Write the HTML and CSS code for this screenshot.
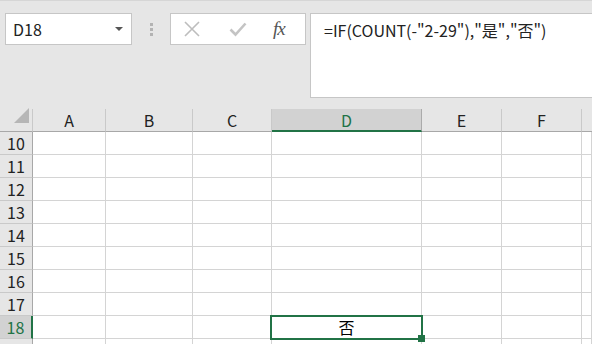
FILE: index.html
```html
<!DOCTYPE html>
<html lang="zh">
<head>
<meta charset="utf-8">
<link rel="stylesheet" href="styles.css">
</head>
<body>
<div class="app">
  <div class="toolbar">
    <div class="namebox">
      <span class="name">D18</span>
      <span class="caret"></span>
    </div>
    <div class="grip"><i></i><i></i><i></i></div>
    <div class="buttons">
      <svg class="ico" width="18" height="18" viewBox="0 0 18 18"><path d="M2 2 L16 16 M16 2 L2 16" stroke="#bdbdbd" stroke-width="1.6" fill="none"/></svg>
      <svg class="ico" width="18" height="18" viewBox="0 0 18 18"><path d="M1.5 9.5 L6.5 14.5 L16.5 3.5" stroke="#c4c4c4" stroke-width="2.6" fill="none"/></svg>
      <span class="fx">fx</span>
    </div>
    <div class="formula">=IF(COUNT(-"2-29"),"是","否")</div>
  </div>
  <div class="sheet">
    <div class="corner"><span class="tri"></span></div>
    <div class="ch">A</div>
    <div class="ch">B</div>
    <div class="ch">C</div>
    <div class="ch sel">D</div>
    <div class="ch">E</div>
    <div class="ch">F</div>
    <div class="ch last"></div>

    <div class="rh">10</div><div class="c"></div><div class="c"></div><div class="c"></div><div class="c"></div><div class="c"></div><div class="c"></div><div class="c"></div>
    <div class="rh">11</div><div class="c"></div><div class="c"></div><div class="c"></div><div class="c"></div><div class="c"></div><div class="c"></div><div class="c"></div>
    <div class="rh">12</div><div class="c"></div><div class="c"></div><div class="c"></div><div class="c"></div><div class="c"></div><div class="c"></div><div class="c"></div>
    <div class="rh">13</div><div class="c"></div><div class="c"></div><div class="c"></div><div class="c"></div><div class="c"></div><div class="c"></div><div class="c"></div>
    <div class="rh">14</div><div class="c"></div><div class="c"></div><div class="c"></div><div class="c"></div><div class="c"></div><div class="c"></div><div class="c"></div>
    <div class="rh">15</div><div class="c"></div><div class="c"></div><div class="c"></div><div class="c"></div><div class="c"></div><div class="c"></div><div class="c"></div>
    <div class="rh">16</div><div class="c"></div><div class="c"></div><div class="c"></div><div class="c"></div><div class="c"></div><div class="c"></div><div class="c"></div>
    <div class="rh">17</div><div class="c"></div><div class="c"></div><div class="c"></div><div class="c"></div><div class="c"></div><div class="c"></div><div class="c"></div>
    <div class="rh sel">18</div><div class="c"></div><div class="c"></div><div class="c"></div><div class="c active">否<span class="handle"></span></div><div class="c"></div><div class="c"></div><div class="c"></div>
    <div class="rh"></div><div class="c"></div><div class="c"></div><div class="c"></div><div class="c"></div><div class="c"></div><div class="c"></div><div class="c"></div>
  </div>
</div>
</body>
</html>
```

FILE: styles.css
```css
html, body {
  margin: 0;
  padding: 0;
  background: #e6e6e6;
  overflow: hidden;
}
body {
  width: 592px;
  height: 344px;
  font-family: "Noto Sans CJK SC", "Noto Sans", sans-serif;
  color: #222;
}
.app {
  display: flex;
  flex-direction: column;
  height: 344px;
  border-top: 1px solid #d6d6d6;
  box-sizing: border-box;
  overflow: hidden;
}
.toolbar {
  flex: none;
  display: flex;
  align-items: flex-start;
  height: 108px;
  padding-top: 12px;
  box-sizing: border-box;
}
.namebox {
  margin-left: 5px;
  width: 127px;
  height: 32px;
  box-sizing: border-box;
  background: #fff;
  border: 1px solid #c6c6c6;
  display: flex;
  align-items: center;
  justify-content: space-between;
  padding: 0 8px 0 7px;
}
.name {
  font-size: 16px;
  line-height: 1;
  color: #222;
}
.caret {
  width: 0;
  height: 0;
  border-left: 4px solid transparent;
  border-right: 4px solid transparent;
  border-top: 4px solid #555;
}
.grip {
  width: 38px;
  height: 32px;
  display: flex;
  flex-direction: column;
  align-items: center;
  justify-content: center;
  gap: 2px;
}
.grip i {
  display: block;
  width: 3px;
  height: 3px;
  background: #b3b3b3;
}
.buttons {
  width: 136px;
  height: 32px;
  box-sizing: border-box;
  background: #fff;
  border: 1px solid #c6c6c6;
  display: flex;
  align-items: center;
  padding-left: 12px;
  gap: 28px;
}
.ico { display: block; flex: none; }
.fx {
  font-family: "Liberation Serif", serif;
  font-style: italic;
  font-size: 19px;
  color: #555;
  margin-left: -2px;
  letter-spacing: -1px;
}
.formula {
  margin-left: 4px;
  flex: 1;
  height: 85px;
  box-sizing: border-box;
  background: #fff;
  border: 1px solid #c6c6c6;
  border-right: none;
  padding: 5px 0 0 13px;
  font-size: 16px;
  line-height: 22px;
  color: #222;
  white-space: nowrap;
}
.sheet {
  display: grid;
  grid-template-columns: 33px 73px 87px 79px 150px 80px 80px 1fr;
  grid-template-rows: repeat(10, 23px) 20px;
  background: #fff;
  flex: none;
}
.corner, .ch {
  background: #e6e6e6;
  border-right: 1px solid #c9c9c9;
  border-bottom: 1px solid #a8a8a8;
  box-sizing: border-box;
}
.corner {
  position: relative;
}
.tri {
  position: absolute;
  right: 3px;
  bottom: 8px;
  width: 0;
  height: 0;
  border-left: 15px solid transparent;
  border-bottom: 15px solid #b6b6b6;
}
.ch {
  font-size: 16px;
  line-height: 22px;
  text-align: center;
  color: #222;
}
.ch.sel {
  background: #d2d2d2;
  color: #217346;
  border-bottom: 2px solid #217346;
  border-right-color: #ababab;
}
.ch.last { border-right: none; }
.rh {
  background: #e6e6e6;
  border-right: 1px solid #a8a8a8;
  border-bottom: 1px solid #c9c9c9;
  box-sizing: border-box;
  font-size: 16px;
  line-height: 22px;
  text-align: center;
  color: #222;
}
.rh.sel {
  background: #d2d2d2;
  color: #217346;
  border-right: 2px solid #217346;
}
.c {
  border-right: 1px solid #d4d4d4;
  border-bottom: 1px solid #d4d4d4;
  box-sizing: border-box;
  background: #fff;
}
.c.active {
  position: relative;
  text-align: center;
  font-size: 16px;
  line-height: 22px;
  color: #000;
}
.c.active::after {
  content: "";
  position: absolute;
  left: -2px;
  top: -1px;
  right: -2px;
  bottom: -2px;
  border: 2px solid #217346;
  pointer-events: none;
}
.handle {
  position: absolute;
  right: -4px;
  bottom: -4px;
  width: 7px;
  height: 7px;
  background: #217346;
  z-index: 2;
}
```
